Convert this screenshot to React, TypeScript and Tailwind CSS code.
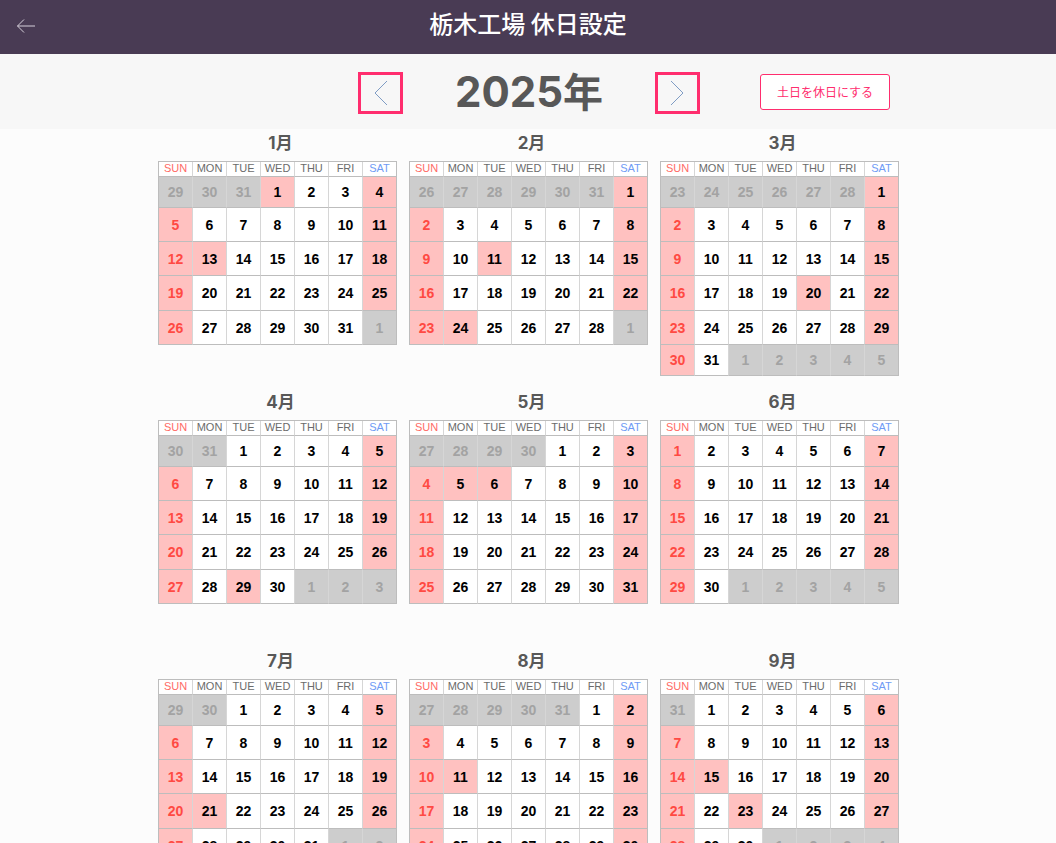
import { useState } from "react";

const YEAR = 2025;
const WEEKDAYS = ["SUN", "MON", "TUE", "WED", "THU", "FRI", "SAT"];
const ROW_HEIGHTS = ["h-[31px]", "h-[34px]", "h-[34px]", "h-[35px]", "h-[34px]", "h-[31px]"];
const NATIONAL_HOLIDAYS = [
  "1-1", "1-13", "2-11", "2-24", "3-20", "4-29", "5-5", "5-6", "7-21", "8-11", "9-15", "9-23",
];

type Day = { key: string; date: number; weekday: number; inMonth: boolean };

function weeksOf(year: number, month: number): Day[][] {
  const lead = new Date(year, month - 1, 1).getDay();
  const count = new Date(year, month, 0).getDate();
  const rows = Math.ceil((lead + count) / 7);
  return Array.from({ length: rows }, (_, r) =>
    Array.from({ length: 7 }, (_, c) => {
      const d = new Date(year, month - 1, r * 7 + c - lead + 1);
      return {
        key: `${d.getMonth() + 1}-${d.getDate()}`,
        date: d.getDate(),
        weekday: c,
        inMonth: d.getMonth() === month - 1,
      };
    }),
  );
}

function initialHolidays(year: number): Set<string> {
  const set = new Set<string>(year === YEAR ? NATIONAL_HOLIDAYS : []);
  weekendsOf(year).forEach((k) => set.add(k));
  return set;
}

function weekendsOf(year: number): string[] {
  const keys: string[] = [];
  for (let m = 1; m <= 12; m++) {
    weeksOf(year, m).flat().forEach((d) => {
      if (d.inMonth && (d.weekday === 0 || d.weekday === 6)) keys.push(d.key);
    });
  }
  return keys;
}

function headColor(i: number) {
  if (i === 0) return "text-[#ff6b66]";
  if (i === 6) return "text-[#6f9bf5]";
  return "text-[#6b6b6b]";
}

function Month({
  year,
  month,
  holidays,
  onToggle,
}: {
  year: number;
  month: number;
  holidays: Set<string>;
  onToggle: (key: string) => void;
}) {
  return (
    <section className="min-h-[247px] w-[239px]">
      <h2 className="flex h-8 items-center justify-center pb-1 pl-1.5 font-[Inter,'Noto_Sans_CJK_JP',sans-serif] text-[17px] leading-6 font-bold text-[#585858]">
        {month}月
      </h2>
      <table className="w-full table-fixed border-separate border-spacing-0 border-t border-l border-[#bdbdbd] bg-white text-center">
        <thead>
          <tr className="h-[15px]">
            {WEEKDAYS.map((w, i) => (
              <th
                key={w}
                scope="col"
                className={`border-r border-b border-r-[#d6d6d6] border-b-[#bdbdbd] p-0 align-top text-[11px] leading-3 font-normal last:border-r-[#bdbdbd] ${headColor(i)}`}
              >
                {w}
              </th>
            ))}
          </tr>
        </thead>
        <tbody>
          {weeksOf(year, month).map((week, r) => (
            <tr key={r} className={ROW_HEIGHTS[r]}>
              {week.map((d) => {
                const off = holidays.has(d.key);
                const bg = !d.inMonth ? "bg-[#cdcdcd]" : off ? "bg-[#ffc1c0]" : "bg-white";
                const fg = !d.inMonth
                  ? "text-[#a3a3a3]"
                  : d.weekday === 0
                    ? "text-[#ff4a43]"
                    : "text-black";
                return (
                  <td
                    key={d.key}
                    className={`border-r border-b border-r-[#d6d6d6] border-b-[#bdbdbd] p-0 text-[14px] leading-5 font-bold last:border-r-[#bdbdbd] ${bg} ${fg}`}
                  >
                    {d.inMonth ? (
                      <button
                        type="button"
                        aria-pressed={off}
                        onClick={() => onToggle(d.key)}
                        className="block w-full cursor-pointer py-1"
                      >
                        {d.date}
                      </button>
                    ) : (
                      d.date
                    )}
                  </td>
                );
              })}
            </tr>
          ))}
        </tbody>
      </table>
    </section>
  );
}

export default function App() {
  const [year, setYear] = useState(YEAR);
  const [holidays, setHolidays] = useState(() => initialHolidays(YEAR));

  const changeYear = (y: number) => {
    setYear(y);
    setHolidays(initialHolidays(y));
  };
  const toggle = (key: string) =>
    setHolidays((prev) => {
      const next = new Set(prev);
      if (!next.delete(key)) next.add(key);
      return next;
    });

  const arrowBox =
    "flex h-[42px] w-[45px] cursor-pointer items-center justify-center border-3 border-[#ff2d6e] text-[#7f9cc4]";

  return (
    <div className="flex h-screen flex-col bg-[#fcfcfc] font-['Liberation_Sans','Noto_Sans_CJK_JP',sans-serif]">
      <header className="grid h-[54px] shrink-0 grid-cols-[1fr_auto_1fr] items-center bg-[#493b54] px-4 text-white">
        <a href="#back" aria-label="戻る" className="justify-self-start">
          <svg width="20" height="16" viewBox="0 0 20 16" fill="none" stroke="#d6d0da" strokeWidth="1">
            <path d="M19 7H1.500M8 0.500L1.500 7L8 13.500" />
          </svg>
        </a>
        <h1 className="pb-2 font-['Noto_Sans_CJK_JP',sans-serif] text-2xl leading-9 font-medium">
          栃木工場 休日設定
        </h1>
      </header>

      <div className="grid h-[75px] shrink-0 grid-cols-[1fr_342px_1fr] items-center bg-[#f7f7f7] pl-0.5">
        <div className="col-start-2 flex items-center justify-between pt-0.5">
          <button type="button" aria-label="前の年" className={arrowBox} onClick={() => changeYear(year - 1)}>
            <svg width="14" height="26" viewBox="0 0 14 26" fill="none" stroke="currentColor" strokeWidth="1">
              <path d="M13 1L1 13L13 25" />
            </svg>
          </button>
          <p className="flex items-baseline font-[Inter,'Noto_Sans_CJK_JP',sans-serif] text-[42px] leading-[60px] font-bold text-[#585858]">
            {year}
            <span className="text-[40px]">年</span>
          </p>
          <button type="button" aria-label="次の年" className={arrowBox} onClick={() => changeYear(year + 1)}>
            <svg width="14" height="26" viewBox="0 0 14 26" fill="none" stroke="currentColor" strokeWidth="1">
              <path d="M1 1L13 13L1 25" />
            </svg>
          </button>
        </div>
        <button
          type="button"
          onClick={() => setHolidays((prev) => new Set([...prev, ...weekendsOf(year)]))}
          className="ml-[60px] h-9 w-[130px] cursor-pointer justify-self-start rounded-[3px] border border-[#ff2d6e] bg-white font-['Noto_Sans_CJK_JP',sans-serif] text-xs text-[#ff2d6e]"
        >
          土日を休日にする
        </button>
      </div>

      <main className="min-h-0 flex-1 overflow-y-auto [scrollbar-width:none]">
        <div className="mx-auto grid w-[740px] grid-cols-[repeat(3,239px)] gap-3">
          {[1, 2, 3, 4, 5, 6, 7, 8, 9].map((m) => (
            <Month key={m} year={year} month={m} holidays={holidays} onToggle={toggle} />
          ))}
        </div>
      </main>
    </div>
  );
}
